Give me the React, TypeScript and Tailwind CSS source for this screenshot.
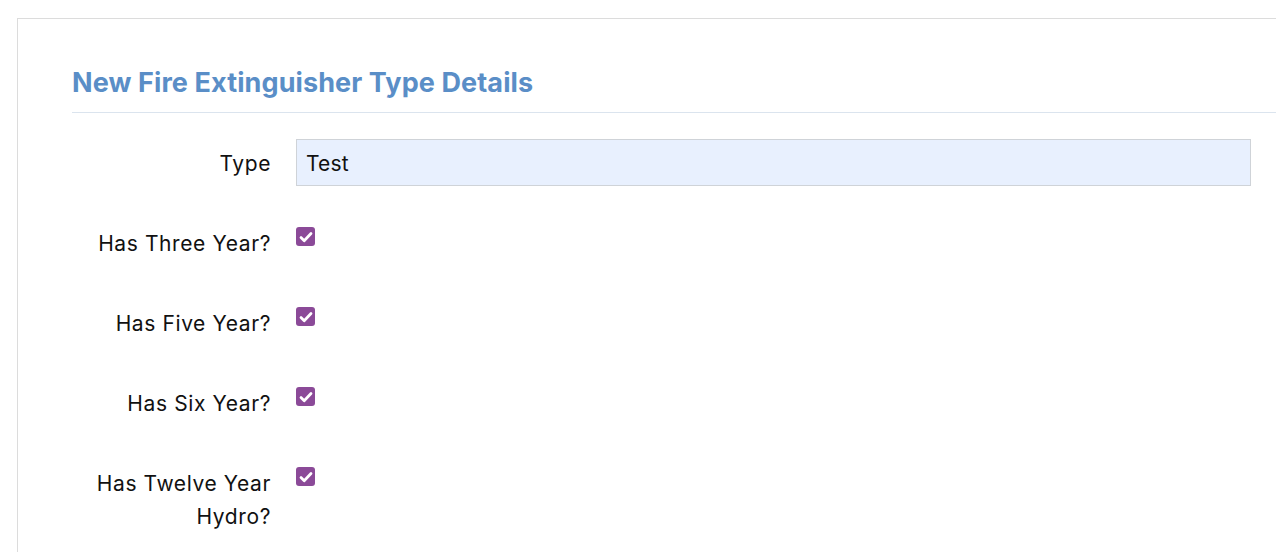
import React from 'react';

const rows: string[] = ['Has Three Year?', 'Has Five Year?', 'Has Six Year?', 'Has Twelve Year Hydro?'];

function Checkbox() {
  return (
    <span className="flex h-[19px] w-[19px] shrink-0 items-center justify-center rounded-[3px] bg-[#8b4a98]">
      <svg viewBox="0 0 16 16" className="h-[16px] w-[16px]" fill="none">
        <path d="M3 8.6l3.2 3.1 6.8-7.2" stroke="#fff" strokeWidth="2.8" strokeLinecap="round" strokeLinejoin="round" />
      </svg>
    </span>
  );
}

export default function App() {
  return (
    <div className="min-h-[552px] bg-white pl-[17px] pt-[18px]" style={{ fontFamily: 'Inter, "Noto Sans", sans-serif' }}>
      <div className="min-h-[534px] border-l border-t border-[#dcdcdc] pl-[54px] pt-[48px]">
        <h1 className="text-[27px] font-bold leading-[32px] tracking-[0.1px] text-[#5a8ec7]">
          New Fire Extinguisher Type Details
        </h1>
        <div className="mt-[13px] h-px bg-[#dbe4ee]" />

        {/* form rows */}
        <div className="pr-[25px]">
          <div className="mt-[26px] mb-[41px] flex items-center">
            <label className="w-[199px] shrink-0 pt-[1px] text-right text-[21px] leading-[33px] tracking-[0.6px] text-[#111]">Type</label>
            <input
              defaultValue="Test"
              className="ml-[25px] h-[47px] flex-1 border border-[#cfd3d8] bg-[#e8f0fe] px-[9px] pt-[1px] text-[21px] tracking-[0.2px] text-[#111] outline-none"
            />
          </div>

          {rows.map((label) => (
            <div key={label} className="mb-[47px] flex items-start">
              <label className="w-[199px] shrink-0 pl-[20px] text-right text-[21px] leading-[33px] tracking-[0.6px] text-[#111]">{label}</label>
              <div className="ml-[25px]">
                <Checkbox />
              </div>
            </div>
          ))}
        </div>
      </div>
    </div>
  );
}
